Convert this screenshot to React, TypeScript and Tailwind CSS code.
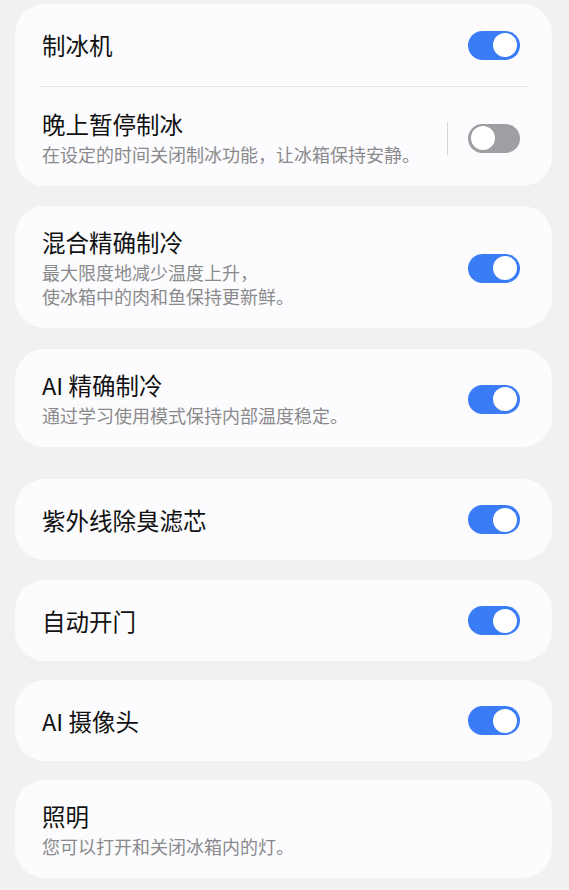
import { useState } from 'react';

type Item = {
  id: string;
  title: string;
  lines?: string[];
  on?: boolean;
  gap: string;
};

const items: Item[] = [
  {
    id: 'hybrid',
    title: '混合精确制冷',
    lines: ['最大限度地减少温度上升，', '使冰箱中的肉和鱼保持更新鲜。'],
    on: true,
    gap: 'mt-[20px]'
  },
  {
    id: 'ai-cool',
    title: 'AI 精确制冷',
    lines: ['通过学习使用模式保持内部温度稳定。'],
    on: true,
    gap: 'mt-[21px]'
  },
  { id: 'uv', title: '紫外线除臭滤芯', on: true, gap: 'mt-[32px]' },
  { id: 'door', title: '自动开门', on: true, gap: 'mt-[20px]' },
  { id: 'camera', title: 'AI 摄像头', on: true, gap: 'mt-[19px]' },
  { id: 'light', title: '照明', lines: ['您可以打开和关闭冰箱内的灯。'], gap: 'mt-[19px]' }
];

function Toggle({ on, onChange }: { on: boolean; onChange: () => void }) {
  return (
    <button
      type="button"
      onClick={onChange}
      className={`flex h-[29px] w-[52px] shrink-0 items-center rounded-full px-[3px] ${
        on ? 'justify-end bg-[#3a7cf6]' : 'justify-start bg-[#9e9ea3]'
      }`}
    >
      <span className="h-[24px] w-[24px] rounded-full bg-white" />
    </button>
  );
}

function Texts({ title, lines }: { title: string; lines?: string[] }) {
  return (
    <div className="min-w-0 flex-1">
      <p className="text-[23.5px] leading-[28px] text-[#111111]">{title}</p>
      {lines ? (
        <div className="mt-[4px]">
          {lines.map((line) => (
            <p className="text-[18px] leading-[24px] text-[#8a8a8c]" key={line}>
              {line}
            </p>
          ))}
        </div>
      ) : null}
    </div>
  );
}

export default function App() {
  const [state, setState] = useState<Record<string, boolean>>({
    ice: true,
    night: false,
    ...Object.fromEntries(items.map((item) => [item.id, !!item.on]))
  });

  function flip(id: string) {
    setState((current) => ({ ...current, [id]: !current[id] }));
  }

  return (
    <div
      className="min-h-[890px] bg-[#f1f1f3] pb-[10px] pl-[15px] pr-[17px] pt-[4px]"
      style={{ fontFamily: '"Noto Sans CJK SC", "Noto Sans", sans-serif' }}
    >
      <section className="rounded-[30px] bg-[#fcfcfe]">
        <div className="flex h-[82px] items-center pl-[27px] pr-[32px]">
          <Texts title="制冰机" />
          <Toggle on={state.ice} onChange={() => flip('ice')} />
        </div>
        <div className="mx-[25px] h-px bg-[#e3e3e6]" />
        <div className="flex items-center pb-[20px] pl-[27px] pr-[32px] pt-[23px]">
          <Texts title="晚上暂停制冰" lines={['在设定的时间关闭制冰功能，让冰箱保持安静。']} />
          <div className="mr-[20px] h-[33px] w-px bg-[#d6d6d9]" />
          <Toggle on={state.night} onChange={() => flip('night')} />
        </div>
      </section>

      {items.map((item) => (
        <section
          className={`${item.gap} flex items-center rounded-[30px] bg-[#fcfcfe] pl-[27px] pr-[32px] ${
            item.lines ? 'pb-[20px] pt-[22px]' : 'h-[81px]'
          }`}
          key={item.id}
        >
          <Texts title={item.title} lines={item.lines} />
          {item.id !== 'light' ? <Toggle on={state[item.id]} onChange={() => flip(item.id)} /> : null}
        </section>
      ))}
    </div>
  );
}
